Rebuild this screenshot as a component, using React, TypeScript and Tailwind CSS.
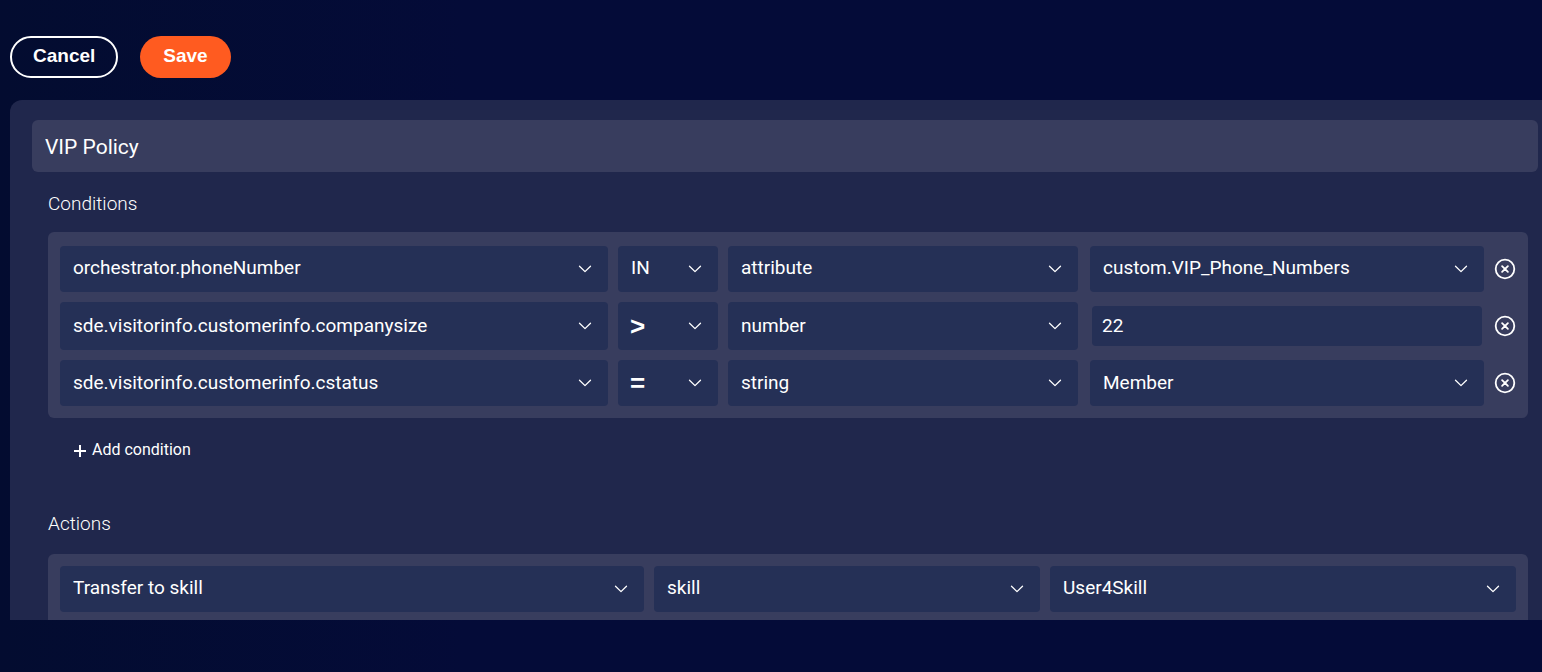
import { useState } from 'react'
import clsx from 'clsx'

interface Condition {
  id: number
  field: string
  operator: string
  type: string
  value: string
  freeText?: boolean
}

const initialConditions: Condition[] = [
  { id: 1, field: 'orchestrator.phoneNumber', operator: 'IN', type: 'attribute', value: 'custom.VIP_Phone_Numbers' },
  { id: 2, field: 'sde.visitorinfo.customerinfo.companysize', operator: '>', type: 'number', value: '22', freeText: true },
  { id: 3, field: 'sde.visitorinfo.customerinfo.cstatus', operator: '=', type: 'string', value: 'Member' },
]

function SelectField({ label, value, symbol }: { label: string; value: string; symbol?: boolean }) {
  return (
    <div className="relative h-full">
      <select
        aria-label={label}
        defaultValue={value}
        className={clsx(
          'block h-full min-h-[46px] w-full appearance-none rounded bg-[#253056] pr-9 pb-0.5 text-white outline-none',
          symbol ? "pl-3 font-['Liberation_Sans',Arial,sans-serif] text-[26px] leading-7 font-bold" : 'pl-[13px] text-[19px]',
        )}
      >
        <option>{value}</option>
      </select>
      <svg
        viewBox="0 0 14 8"
        className="pointer-events-none absolute top-1/2 right-4 h-2 w-3.5 -translate-y-1/2"
        fill="none"
        stroke="white"
        strokeWidth="1.3"
        strokeLinecap="round"
        strokeLinejoin="round"
      >
        <path d="M1.5 1.2 7 6.6l5.500-5.400" />
      </svg>
    </div>
  )
}

function RemoveIcon() {
  return (
    <svg viewBox="0 0 22 22" className="h-[22px] w-[22px]" fill="none" stroke="white" strokeWidth="1.800" strokeLinecap="round">
      <circle cx="11" cy="11" r="9.300" />
      <path d="m8.100 8.100 5.800 5.800m0-5.800-5.800 5.800" />
    </svg>
  )
}

export default function App() {
  const [conditions, setConditions] = useState(initialConditions)

  function removeCondition(id: number) {
    setConditions(conditions.filter(c => c.id !== id))
  }

  function addCondition() {
    setConditions([...conditions, { id: Date.now(), field: '', operator: '=', type: 'string', value: '' }])
  }

  return (
    <div className="min-h-screen bg-[#040b36] bg-linear-to-r from-[#030c30] to-[#040b38] to-30% pt-9 pl-2.5 font-[Roboto,sans-serif] text-white">
      <div className="flex gap-[22px] font-['Liberation_Sans',Arial,sans-serif] text-[19px] font-bold">
        <button className="h-[42px] rounded-full border-2 border-white px-[21px] pb-0.5">Cancel</button>
        <button className="h-[42px] rounded-full bg-[#ff5b20] px-[23px] pb-0.5">Save</button>
      </div>

      <main className="mt-[22px] rounded-tl-xl bg-[#20274c] pt-5">
        <input
          aria-label="Policy name"
          defaultValue="VIP Policy"
          className="ml-[22px] block h-[52px] w-[calc(100%-26px)] rounded-md bg-[#383d5e] px-[13px] pt-0.5 text-[21px] outline-none"
        />

        <div className="pr-3.5 pl-[38px]">
          <h2 className="pt-[18px] pb-[14px] text-[19px] leading-7 font-light">Conditions</h2>
          <div className="flex flex-col gap-2.5 rounded-md bg-[#383d5e] px-3 pt-3.5 pb-3">
            {conditions.map(c => (
              <div
                key={c.id}
                className={clsx(
                  'grid grid-cols-[minmax(0,548fr)_100px_minmax(0,350fr)_minmax(0,396fr)_22px] items-center gap-2.5 not-first:[&_select]:pb-0',
                  c.freeText ? 'h-12' : 'h-[46px]',
                )}
              >
                <SelectField label="Field" value={c.field} />
                <SelectField label="Operator" value={c.operator} symbol={c.operator !== 'IN'} />
                <SelectField label="Value type" value={c.type} />
                {c.freeText ? (
                  <div className="pr-0.5 pl-1">
                    <input
                      aria-label="Value"
                      defaultValue={c.value}
                      className="block h-10 w-full rounded bg-[#253056] px-2.5 pb-0.5 text-[19px] outline-none"
                    />
                  </div>
                ) : (
                  <div className="h-full pl-0.5">
                    <SelectField label="Value" value={c.value} />
                  </div>
                )}
                <button aria-label="Remove condition" onClick={() => removeCondition(c.id)}>
                  <RemoveIcon />
                </button>
              </div>
            ))}
          </div>

          <button onClick={addCondition} className="mt-5 ml-[26px] flex h-6 items-center gap-1.5 text-base">
            <svg viewBox="0 0 12 12" className="mt-0.5 h-3 w-3" stroke="white" strokeWidth="2">
              <path d="M6 0v12M0 6h12" />
            </svg>
            Add condition
          </button>

          <h2 className="pt-12 pb-4 text-[19px] leading-7 font-light">Actions</h2>
          <div className="grid grid-cols-[minmax(0,584fr)_minmax(0,386fr)_minmax(0,466fr)] gap-2.5 rounded-t-md bg-[#383d5e] px-3 pt-3 pb-2">
            <SelectField label="Action" value="Transfer to skill" />
            <SelectField label="Target type" value="skill" />
            <SelectField label="Target" value="User4Skill" />
          </div>
        </div>
      </main>
    </div>
  )
}
